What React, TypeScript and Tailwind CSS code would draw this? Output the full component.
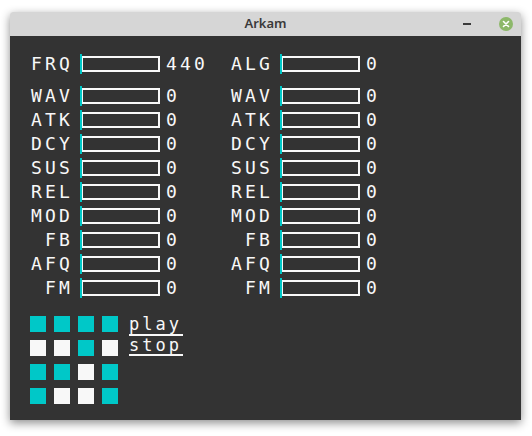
import React from "react";

const mono = { fontFamily: '"DejaVu Sans Mono", "Liberation Mono", monospace' };

type Row = { l: string; v: string };

const left: Row[] = [
  { l: "WAV", v: "0" },
  { l: "ATK", v: "0" },
  { l: "DCY", v: "0" },
  { l: "SUS", v: "0" },
  { l: "REL", v: "0" },
  { l: "MOD", v: "0" },
  { l: "FB", v: "0" },
  { l: "AFQ", v: "0" },
  { l: "FM", v: "0" },
];

function Param({ l, v }: Row) {
  return (
    <div className="flex items-center h-[24px] w-[200px]">
      <div className="w-[44px] text-right text-[18px] tracking-[3.2px] text-[#f8f8f8] leading-none" style={mono}>
        {l}
      </div>
      <div className="relative w-[80px] h-[20px] ml-[7px]">
        <div className="absolute left-[1px] top-[2px] w-[79px] h-[16px] border-2 border-[#f8f8f8]" />
        <div className="absolute left-0 top-0 w-[2px] h-[20px] bg-[#00c8c8]" />
      </div>
      <div className="ml-[6px] text-[18px] tracking-[3.2px] text-[#f8f8f8] leading-none" style={mono}>
        {v}
      </div>
    </div>
  );
}

const C = "bg-[#00c8c8]";
const W = "bg-[#f8f8f8]";
const grid = [
  [C, C, C, C],
  [W, W, C, W],
  [C, C, W, C],
  [C, W, W, C],
];

export default function App() {
  return (
    <div className="w-[532px] h-[436px] bg-white pl-[10px] pt-[12px]">
      <div className="w-[511px] h-[408px] flex flex-col rounded-t-[3px] overflow-hidden shadow-[0_3px_10px_rgba(0,0,0,0.45)]">
        <div className="h-[24px] bg-[#d6d6d6] flex items-center relative">
          <div
            className="flex-1 text-center text-[13px] font-semibold text-[#3a3a3a]"
            style={{ fontFamily: '"Noto Sans", "Open Sans", sans-serif' }}
          >
            Arkam
          </div>
          <div className="absolute left-[453px] top-[11px] w-[8px] h-[2px] bg-[#3a3a3a]" />
          <div className="absolute left-[489px] top-[5px] w-[14px] h-[14px] rounded-full bg-[#8db86a] flex items-center justify-center">
            <svg width="8" height="8" viewBox="0 0 8 8">
              <path d="M1.5 1.5 L6.5 6.5 M6.5 1.5 L1.5 6.5" stroke="#ffffff" strokeWidth="1.6" strokeLinecap="round" />
            </svg>
          </div>
        </div>
        <div className="flex-1 bg-[#333333] pl-[19px] pt-[16px]">
          <div className="flex">
            <Param l="FRQ" v="440" />
            <Param l="ALG" v="0" />
          </div>
          <div className="flex mt-[8px]">
            <div className="flex flex-col">
              {left.map((r) => (
                <Param key={r.l} {...r} />
              ))}
            </div>
            <div className="flex flex-col">
              {left.map((r) => (
                <Param key={r.l} {...r} />
              ))}
            </div>
          </div>
          <div className="flex mt-[16px] pl-[1px]">
            <div className="grid grid-cols-4 gap-[8px] w-[88px]">
              {grid.flat().map((c, i) => (
                <div key={i} className={`w-[16px] h-[16px] ${c}`} />
              ))}
            </div>
            <div className="ml-[11px] flex flex-col text-[#f8f8f8] text-[17px] tracking-[3px] leading-none" style={mono}>
              <div className="border-b-2 border-[#f8f8f8] w-[54px] h-[20px]">play</div>
              <div className="border-b-2 border-[#f8f8f8] w-[54px] h-[20px] pt-[1px]">stop</div>
            </div>
          </div>
        </div>
      </div>
    </div>
  );
}
